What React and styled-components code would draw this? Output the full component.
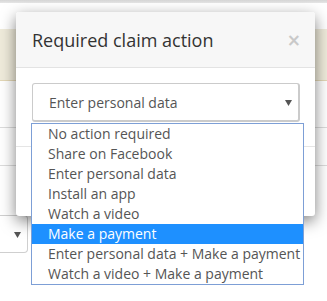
import React from "react";
import styled, { createGlobalStyle } from "styled-components";

const Global = createGlobalStyle`
  html, body { margin: 0; padding: 0; background: #fff; overflow: hidden; }
  * { box-sizing: border-box; }
  body { font-family: "Open Sans", "Noto Sans", sans-serif; }
`;

const Page = styled.div`
  position: relative;
  width: 327px;
  height: 301px;
  overflow: hidden;
  background: #fff;
  display: flex;
  flex-direction: column;
`;

const TopStrip = styled.div`
  height: 3px;
  background: linear-gradient(#d6d6d6, #e6e6e6);
`;

const Banner = styled.div`
  margin-top: 26px;
  height: 52px;
  background: #efebdb;
  border-bottom: 1px solid #e3d7b6;
`;

const Rows = styled.div`
  margin-top: 46px;
  display: flex;
  flex-direction: column;
`;

const Row = styled.div`
  height: ${(p) => p.$h}px;
  border-top: 1px solid #dcdcdc;
`;

const BackSelect = styled.div`
  width: 28px;
  height: 38px;
  border: 1px solid #cfcfcf;
  border-left: none;
  border-radius: 0 4px 4px 0;
  display: flex;
  align-items: center;
  justify-content: flex-end;
  padding-right: 6px;
`;

const Modal = styled.div`
  position: absolute;
  left: 16px;
  top: 12px;
  width: 299px;
  height: 204px;
  background: #fff;
  border-radius: 3px;
  box-shadow: 0 5px 15px rgba(0, 0, 0, 0.5);
  display: flex;
  flex-direction: column;
`;

const Header = styled.div`
  height: 56px;
  background: #f7f7f7;
  border-bottom: 1px solid #e3e3e3;
  border-radius: 3px 3px 0 0;
  display: flex;
  align-items: center;
  justify-content: space-between;
  padding: 0 14px 0 16px;
`;

const Title = styled.h4`
  margin: 0;
  font-size: 18px;
  font-weight: 400;
  color: #333;
  line-height: 20px;
`;

const Close = styled.span`
  font-family: "DejaVu Sans", sans-serif;
  font-size: 17px;
  font-weight: 700;
  color: #c9c9c9;
  line-height: 1;
  margin-top: 1px;
`;

const Body = styled.div`
  padding: 15px 15px 0 16px;
  height: 78px;
`;

const Footer = styled.div`
  flex: 1;
  border-top: 1px solid #e5e5e5;
`;

const SelectWrap = styled.div`
  position: relative;
  width: 100%;
`;

const SelectBox = styled.div`
  height: 39px;
  border: 2px solid #cbcbcb;
  border-width: 1px 2px 2px 1px;
  border-radius: 3px;
  background: #fff;
  display: flex;
  align-items: center;
  justify-content: space-between;
  padding: 0 6px 0 16px;
  font-size: 14px;
  color: #555;
`;

const List = styled.ul`
  position: absolute;
  left: -1px;
  top: 40px;
  width: 273px;
  margin: 0;
  padding: 0;
  list-style: none;
  background: #fff;
  border: 1px solid #7d9fd6;
  z-index: 2;
`;

const Item = styled.li`
  height: 20px;
  line-height: 20px;
  padding-left: 16px;
  font-size: 14px;
  white-space: nowrap;
  color: ${(p) => (p.$active ? "#fff" : "#555")};
  background: ${(p) => (p.$active ? "#1e90ff" : "transparent")};
`;

const Caret = ({ color = "#555" }) => (
  <svg width="7" height="7" viewBox="0 0 7 7">
    <path d="M0 1 L7 1 L3.5 7 Z" fill={color} />
  </svg>
);

const options = [
  "No action required",
  "Share on Facebook",
  "Enter personal data",
  "Install an app",
  "Watch a video",
  "Make a payment",
  "Enter personal data + Make a payment",
  "Watch a video + Make a payment",
];

export default function App() {
  return (
    <>
      <Global />
      <Page>
        <TopStrip />
        <Banner />
        <Rows>
          <Row $h={38} />
          <Row $h={50} />
          <BackSelect>
            <Caret />
          </BackSelect>
        </Rows>
        <Modal>
          <Header>
            <Title>Required claim action</Title>
            <Close>×</Close>
          </Header>
          <Body>
            <SelectWrap>
              <SelectBox>
                <span>Enter personal data</span>
                <Caret />
              </SelectBox>
              <List>
                {options.map((o) => (
                  <Item key={o} $active={o === "Make a payment"}>
                    {o}
                  </Item>
                ))}
              </List>
            </SelectWrap>
          </Body>
          <Footer />
        </Modal>
      </Page>
    </>
  );
}
